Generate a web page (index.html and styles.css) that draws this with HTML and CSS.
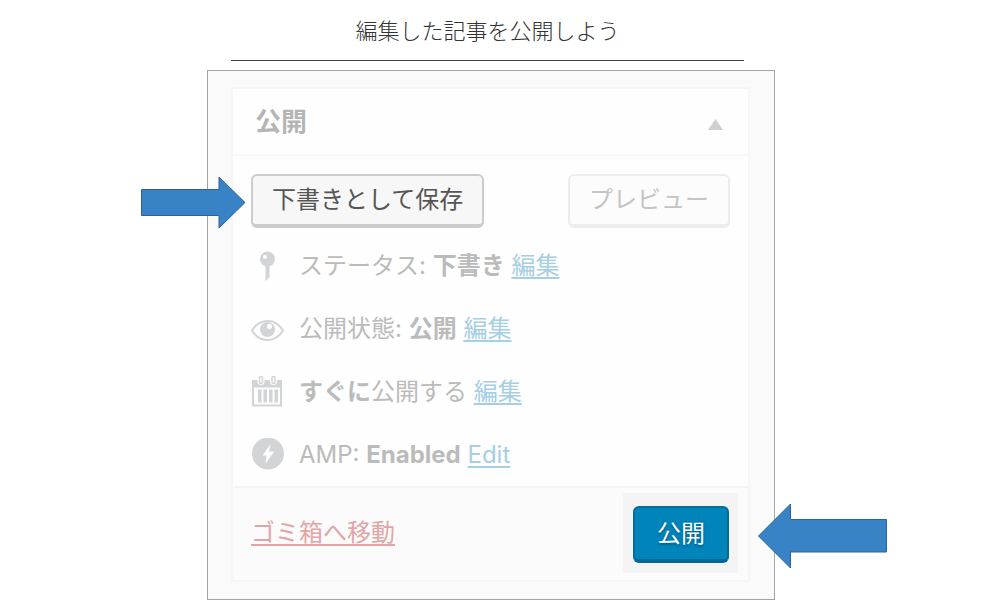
FILE: index.html
```html
<!DOCTYPE html>
<html lang="ja">
<head>
  <meta charset="UTF-8" />
  <meta name="viewport" content="width=device-width, initial-scale=1.0" />
  <title>編集した記事を公開しよう</title>
  <link rel="stylesheet" href="styles.css">
</head>
<body>
  <main class="slide">
    <h1 class="slide-title">編集した記事を公開しよう</h1>

    <div class="frame">
      <section class="postbox">
        <header class="postbox-header">
          <h2>公開</h2>
          <button class="toggle" type="button" aria-label="パネルを閉じる">
            <svg width="15" height="11" viewBox="0 0 15 11"><path d="M7.5 0L15 11H0z"/></svg>
          </button>
        </header>

        <div class="postbox-body">
          <div class="actions">
            <button class="btn btn-save" type="button">下書きとして保存</button>
            <button class="btn btn-preview" type="button">プレビュー</button>
          </div>

          <ul class="settings">
            <!-- ステータス -->
            <li>
              <svg class="icon" width="34" height="34" viewBox="0 0 34 34">
                <circle cx="16.5" cy="10" r="7.5"/>
                <path d="M14.5 16h4v12.500l-4 3.500z"/>
                <circle class="hole" cx="14" cy="8" r="2"/>
              </svg>
              <span>ステータス: <b>下書き</b> <a href="#">編集</a></span>
            </li>
            <!-- 公開状態 -->
            <li>
              <svg class="icon" width="34" height="34" viewBox="0 0 34 34">
                <path class="line" d="M1 18.5C5 12 10 9 16.5 9S28 12 32 18.5C28 25 23 28 16.5 28S5 25 1 18.5z"/>
                <circle cx="16.5" cy="17.5" r="7.5"/>
                <circle class="hole" cx="18.5" cy="14.3" r="2.6"/>
              </svg>
              <span>公開状態: <b>公開</b> <a href="#">編集</a></span>
            </li>
            <!-- 公開日時 -->
            <li>
              <svg class="icon" width="34" height="34" viewBox="0 0 34 34">
                <path fill-rule="evenodd" d="M1 5h30v26.500H1zM3 12.500v17h26v-17z"/>
                <rect class="hole" x="6.5" y="0" width="7" height="10" rx="3.5"/>
                <rect class="hole" x="19" y="0" width="7" height="10" rx="3.5"/>
                <rect class="ring" x="8.5" y="1.500" width="3" height="7" rx="1.500"/>
                <rect class="ring" x="21" y="1.500" width="3" height="7" rx="1.500"/>
                <path d="M7 14.500h3.500v13H7zM12.500 14.500H16v13h-3.500zM18 14.500h3.500v13H18zM23.500 14.500H27v13h-3.500z"/>
              </svg>
              <span><b>すぐに</b>公開する <a href="#">編集</a></span>
            </li>
            <!-- AMP -->
            <li>
              <svg class="icon" width="34" height="34" viewBox="0 0 34 34">
                <circle cx="17" cy="15.500" r="16"/>
                <path class="hole" d="M19.500 6L11.500 17.500h4L14.500 26 23 13.500h-5z"/>
              </svg>
              <span>AMP: <b>Enabled</b> <a href="#">Edit</a></span>
            </li>
          </ul>
        </div>

        <footer class="postbox-footer">
          <a class="trash" href="#">ゴミ箱へ移動</a>
          <div class="highlight">
            <button class="btn-publish" type="button">公開</button>
          </div>
        </footer>
      </section>

      <svg class="arrow arrow-save" width="105" height="53" viewBox="0 0 105 53">
        <path d="M.5 13.500H78V1L104 26.500 78 52V39.500H.5z"/>
      </svg>
      <svg class="arrow arrow-publish" width="129" height="66" viewBox="0 0 129 66">
        <path d="M128.500 16.500H32.500V1L.5 33 32.500 65V49H128.500z"/>
      </svg>
    </div>
  </main>
</body>
</html>
```

FILE: styles.css
```css
* {
  box-sizing: border-box;
}

body {
  margin: 0;
  background: #fff;
  font-family: Inter, "Noto Sans CJK JP", sans-serif;
  font-size: 24px;
  line-height: 32px;
  color: #bbb;
}

button {
  font: inherit;
  cursor: pointer;
}

.slide {
  min-width: 768px;
  padding: 0 212px 6px 207px;
}

/* 見出しと下線 */
.slide-title {
  margin: 0 31px 9px 24px;
  padding: 15px 0 13px;
  border-bottom: 1px solid #404040;
  font-size: 22px;
  font-weight: 300;
  text-align: center;
  color: #333;
}

/* 外枠 */
.frame {
  position: relative;
  padding: 16px 24px 17px 23px;
  border: 1px solid #a3a3a3;
  background: #fafafa;
}

.postbox {
  border: 2px solid #f6f6f6;
  background: #fefefe;
}

.postbox-header {
  display: flex;
  justify-content: space-between;
  align-items: center;
  height: 67px;
  padding: 0 25px 0 22px;
  border-bottom: 2px solid #f8f8f8;
}

.postbox-header h2 {
  margin: 0;
  font-size: 26px;
  font-weight: 700;
  color: #b4b5b6;
}

.toggle {
  display: flex;
  padding: 5px 0 0;
  border: 0;
  background: none;
}

.toggle svg {
  fill: #cdcfd0;
}

.postbox-body {
  padding: 18px 18px 0;
}

.actions {
  display: flex;
  justify-content: space-between;
  margin-bottom: 6px;
}

.btn {
  height: 54px;
  padding: 0 19px;
  border: 2px solid;
  border-bottom-width: 4px;
  border-radius: 6px;
}

.btn-save {
  border-color: #ccc;
  background: #f7f7f7;
  color: #555;
}

.btn-preview {
  border-color: #ededed;
  background: #fcfcfc;
  color: #c4c4c4;
}

/* 設定の一覧 */
.settings {
  margin: 0;
  padding: 0;
  list-style: none;
}

.settings li {
  display: flex;
  align-items: center;
  gap: 14px;
  height: 63px;
}

.icon {
  flex: none;
  fill: #d2d4d6;
}

.icon .hole {
  fill: #fefefe;
}

.icon .line {
  fill: none;
  stroke: #d2d4d6;
  stroke-width: 2;
}

.icon .ring {
  fill: #fefefe;
  stroke: #d2d4d6;
  stroke-width: 1.5;
}

a {
  color: #a6cfe4;
  text-decoration-thickness: 2px;
  text-underline-offset: 3px;
}

/* フッター */
.postbox-footer {
  display: flex;
  justify-content: space-between;
  align-items: center;
  padding: 5px 10px 7px 18px;
  border-top: 2px solid #f4f4f4;
  background: #fbfbfb;
}

.trash {
  color: #e2a5a6;
}

.highlight {
  padding: 13px 9px 10px 10px;
  background: #f4f4f4;
}

.btn-publish {
  display: block;
  height: 57px;
  padding: 0 22px;
  border: 2px solid #006da0;
  border-bottom: 4px solid #006799;
  border-radius: 6px;
  background: #0085ba;
  color: #fff;
  text-shadow: 0 0 3px #006799, 0 2px 2px #006799;
}

/* 矢印 */
.arrow {
  position: absolute;
  fill: #3883c6;
  stroke: #2d6298;
}

.arrow-save {
  top: 105px;
  left: -67px;
}

.arrow-publish {
  right: -113px;
  bottom: 30px;
}
```
